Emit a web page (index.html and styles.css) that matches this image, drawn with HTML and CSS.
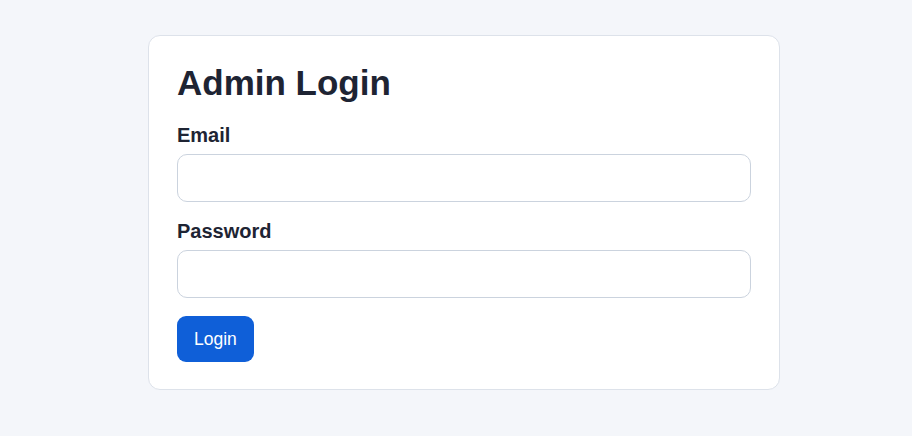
FILE: index.html
```html
<!DOCTYPE html>
<html lang="en">
<head>
  <meta charset="UTF-8">
  <meta name="viewport" content="width=device-width, initial-scale=1.0">
  <title>Admin Login</title>
  <link rel="stylesheet" href="styles.css">
</head>
<body>
  <main class="page">
    <form class="login-card" onsubmit="return false;">
      <h1 class="login-title">Admin Login</h1>
      <div class="field">
        <label class="field-label" for="email">Email</label>
        <input class="field-input" id="email" type="email">
      </div>
      <div class="field">
        <label class="field-label" for="password">Password</label>
        <input class="field-input" id="password" type="password">
      </div>
      <button class="btn-login" type="submit">Login</button>
    </form>
  </main>
</body>
</html>
```

FILE: styles.css
```css
* {
  margin: 0;
  padding: 0;
  box-sizing: border-box;
}

body {
  font-family: "Liberation Sans", Arial, sans-serif;
  background-color: #f4f6fa;
  color: #1e2433;
  min-height: 100vh;
}

.page {
  display: flex;
  justify-content: center;
  padding: 35px 0 0 16px;
}

.login-card {
  width: 632px;
  background-color: #ffffff;
  border: 1px solid #dde2ea;
  border-radius: 12px;
  padding: 27px 28px 27px;
}

.login-title {
  font-size: 35px;
  font-weight: 700;
  margin-bottom: 21px;
}

.field {
  margin-bottom: 18px;
}

.field-label {
  display: block;
  font-size: 20px;
  font-weight: 700;
  margin-bottom: 7px;
}

.field-input {
  display: block;
  width: 100%;
  height: 48px;
  border: 1px solid #cbd3de;
  border-radius: 10px;
  padding: 0 14px;
  font-family: inherit;
  font-size: 17px;
  background-color: #ffffff;
}

.btn-login {
  display: inline-flex;
  align-items: center;
  height: 46px;
  padding: 0 17px;
  border: none;
  border-radius: 9px;
  background-color: #0f5fd8;
  color: #ffffff;
  font-family: inherit;
  font-size: 17.5px;
  cursor: pointer;
}
```
